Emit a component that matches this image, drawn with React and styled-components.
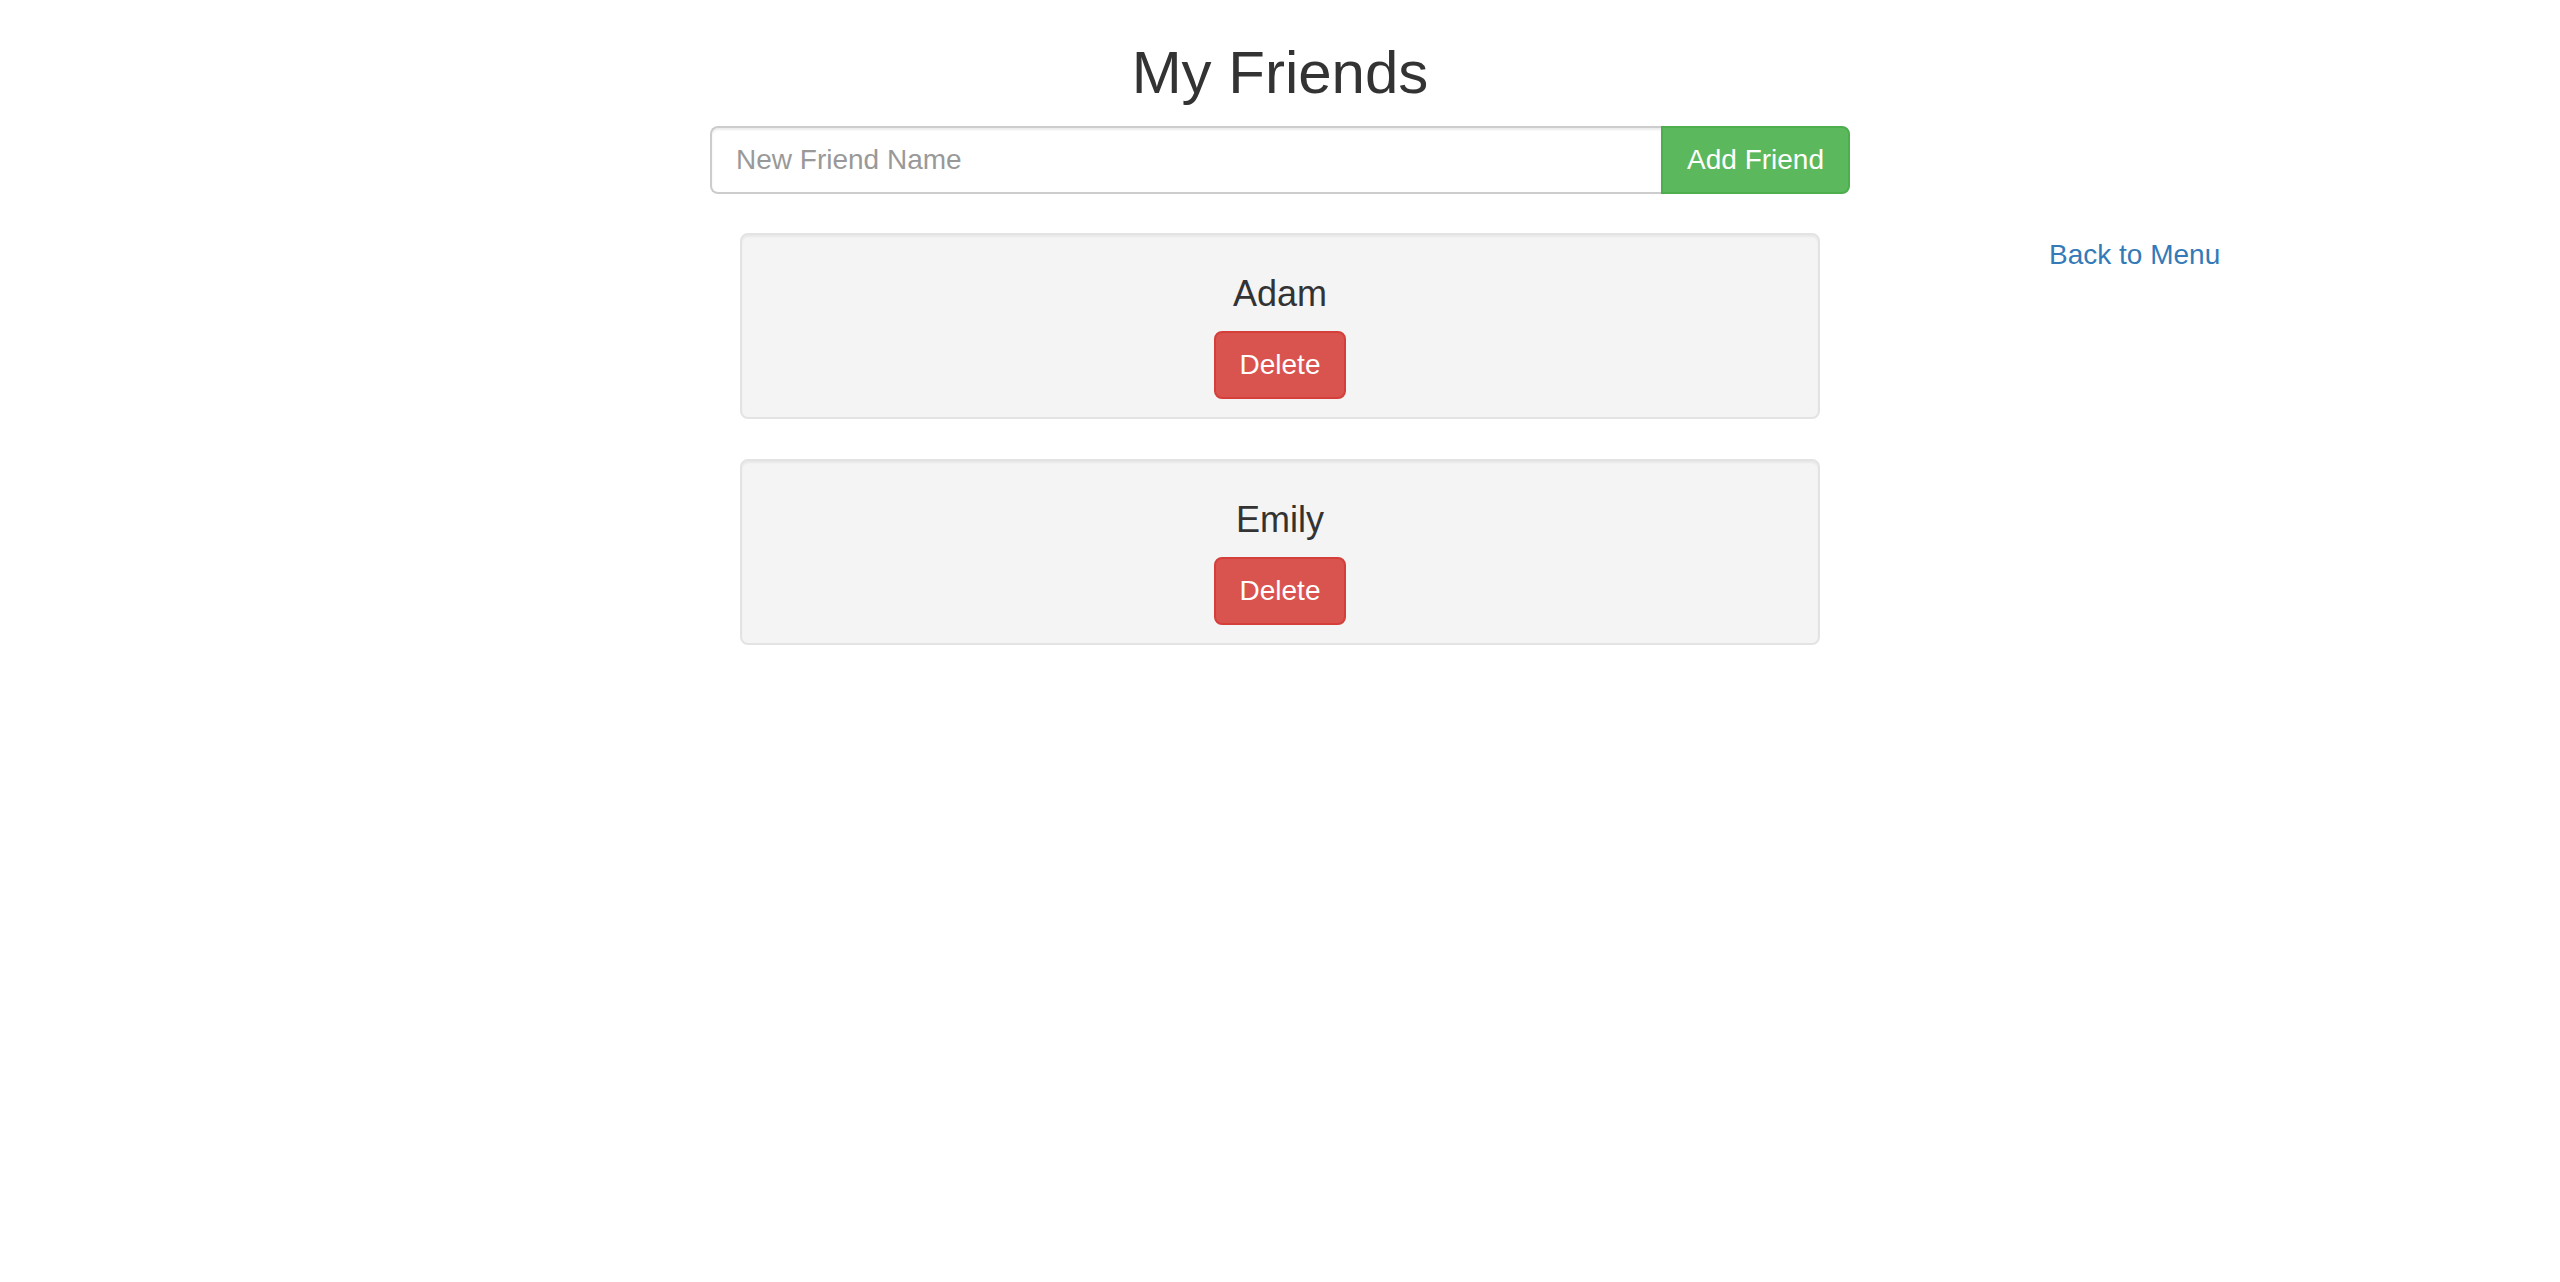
import React, { useState } from 'react'
import styled, { createGlobalStyle } from 'styled-components'

const GlobalStyle = createGlobalStyle`
    html, body {
        margin: 0;
        padding: 0;
        background: #fff;
    }
    body {
        font-family: "Liberation Sans", Arial, Helvetica, sans-serif;
        font-size: 28px;
        line-height: 1.42857;
        color: #333;
    }
    * {
        box-sizing: border-box;
    }
`

const Page = styled.div`
    width: 2560px;
`

const Title = styled.h2`
    margin: 40px 0 20px;
    font-size: 60px;
    font-weight: 500;
    line-height: 1.1;
    text-align: center;
    color: #333;
`

const Form = styled.form`
    display: flex;
    width: 1140px;
    margin: 0 auto;
    height: 68px;
`

const NameInput = styled.input`
    flex: 1;
    height: 68px;
    padding: 12px 24px;
    font-family: inherit;
    font-size: 28px;
    color: #555;
    background: #fff;
    border: 2px solid #ccc;
    border-right: none;
    border-radius: 8px 0 0 8px;
    box-shadow: inset 0 2px 2px rgba(0, 0, 0, .075);
    outline: none;

    &::placeholder {
        color: #999;
    }
`

const Button = styled.button`
    height: 68px;
    padding: 12px 24px;
    font-family: inherit;
    font-size: 28px;
    line-height: 1.42857;
    color: #fff;
    background: ${({variant}) => (variant === 'danger' ? '#d9534f' : '#5cb85c')};
    border: 2px solid ${({variant}) => (variant === 'danger' ? '#d43f3a' : '#4cae4c')};
    border-radius: ${({attached}) => (attached ? '0 8px 8px 0' : '8px')};
    cursor: pointer;
`

const Body = styled.div`
    display: grid;
    grid-template-columns: 1fr 1140px 1fr;
    margin-top: 39px;
`

const FriendList = styled.div`
    grid-column: 2;
    padding: 0 30px;
`

const Well = styled.div`
    display: flex;
    flex-direction: column;
    align-items: center;
    padding: 37px 38px 18px;
    margin-bottom: 40px;
    background: #f4f4f4;
    border: 2px solid #e3e3e3;
    border-radius: 8px;
    box-shadow: inset 0 2px 2px rgba(0, 0, 0, .05);
`

const FriendName = styled.div`
    font-size: 36px;
    font-weight: 500;
    line-height: 44px;
    margin-bottom: 15px;
    color: #333;
`

const Side = styled.div`
    grid-column: 3;
    padding-left: 199px;
    padding-top: 2px;
`

const BackLink = styled.a`
    color: #337ab7;
    text-decoration: none;
    font-size: 28px;
    line-height: 40px;
`

const App = () => {
    const [friends, setFriends] = useState(['Adam', 'Emily'])
    const [name, setName] = useState('')

    const addFriend = (e) => {
        e.preventDefault()
        if (!name.trim()) return
        setFriends([...friends, name.trim()])
        setName('')
    }

    return (
        <Page>
            <GlobalStyle />
            <Title>My Friends</Title>
            <Form onSubmit={addFriend}>
                <NameInput
                    placeholder="New Friend Name"
                    value={name}
                    onChange={(e) => setName(e.target.value)}
                />
                <Button type="submit" attached>Add Friend</Button>
            </Form>
            <Body>
                <FriendList>
                    {friends.map((friend, index) => (
                        <Well key={index}>
                            <FriendName>{friend}</FriendName>
                            <Button
                                type="button"
                                variant="danger"
                                onClick={() => setFriends(friends.filter((_, i) => i !== index))}
                            >
                                Delete
                            </Button>
                        </Well>
                    ))}
                </FriendList>
                <Side>
                    <BackLink href="#">Back to Menu</BackLink>
                </Side>
            </Body>
        </Page>
    )
}

export default App
